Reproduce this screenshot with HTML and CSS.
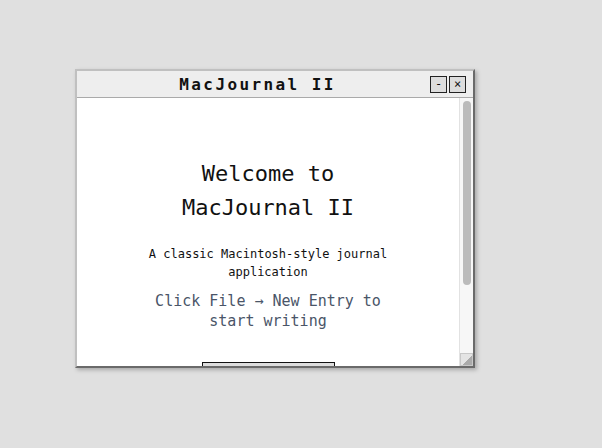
FILE: index.html
```html
<!DOCTYPE html>
<html>
<head>
<meta charset="utf-8">
<link rel="stylesheet" href="styles.css">
</head>
<body>
<div class="desktop">
  <div class="window">
    <div class="titlebar">
      <div class="title">MacJournal II</div>
      <div class="controls">
        <div class="btn">-</div>
        <div class="btn">×</div>
      </div>
    </div>
    <div class="body">
      <div class="content">
        <h1 class="heading">Welcome to MacJournal II</h1>
        <p class="sub">A classic Macintosh-style journal application</p>
        <p class="hint">Click File → New Entry to start writing</p>
        <div class="action"></div>
      </div>
      <div class="scrollbar">
        <div class="thumb"></div>
        <div class="grip"></div>
      </div>
    </div>
  </div>
</div>
</body>
</html>
```
FILE: styles.css
```css
html, body {
  margin: 0;
  padding: 0;
  background: #e0e0e0;
  width: 602px;
  height: 448px;
  overflow: hidden;
  font-family: "DejaVu Sans Mono", monospace;
}
.desktop {
  padding: 69px 0 0 75px;
}
.window {
  width: 396px;
  height: 295px;
  border: 2px solid;
  border-color: #c0c0c0 #6a6a6a #6a6a6a #c0c0c0;
  background: #fff;
  box-shadow: 2px 2px 4px rgba(0,0,0,0.25);
  display: flex;
  flex-direction: column;
}
.titlebar {
  height: 26px;
  background: #eeeeee;
  border-bottom: 1px solid #aaaaaa;
  display: flex;
  align-items: center;
  padding: 0 7px 0 8px;
}
.title {
  flex: 1;
  text-align: center;
  font-weight: bold;
  font-size: 16px;
  letter-spacing: 2.4px;
  color: #111;
  padding-top: 1px;
}
.controls {
  display: flex;
  gap: 2px;
}
.btn {
  width: 15px;
  height: 15px;
  border: 1px solid #222;
  background: #dddddd;
  font-size: 12px;
  line-height: 15px;
  text-align: center;
  color: #111;
}
.body {
  flex: 1;
  display: flex;
  overflow: hidden;
}
.content {
  flex: 1;
  overflow: hidden;
  display: flex;
  flex-direction: column;
  align-items: center;
  text-align: center;
  padding-top: 59px;
}
.heading {
  margin: 0;
  font-weight: normal;
  font-size: 22px;
  line-height: 34px;
  width: 200px;
  color: #111;
}
.sub {
  margin: 20px 0 0;
  font-size: 12px;
  line-height: 18px;
  width: 250px;
  color: #111;
}
.hint {
  margin: 10px 0 0;
  font-size: 15px;
  line-height: 20px;
  width: 240px;
  color: #4a5568;
}
.action {
  margin-top: 31px;
  width: 131px;
  height: 24px;
  border: 1px solid #111;
  background: #dddddd;
  flex-shrink: 0;
}
.scrollbar {
  width: 13px;
  border-left: 1px solid #e2e2e2;
  background: #f7f7f7;
  display: flex;
  flex-direction: column;
  align-items: center;
}
.thumb {
  width: 8px;
  height: 184px;
  margin-top: 3px;
  border-radius: 4px;
  background: #bbbbbb;
}
.grip {
  margin-top: auto;
  align-self: flex-end;
  width: 11px;
  height: 11px;
  border: 1px solid #c8c8c8;
  background: linear-gradient(135deg, #e4e4e4 55%, #aaaaaa 55%);
}
```
